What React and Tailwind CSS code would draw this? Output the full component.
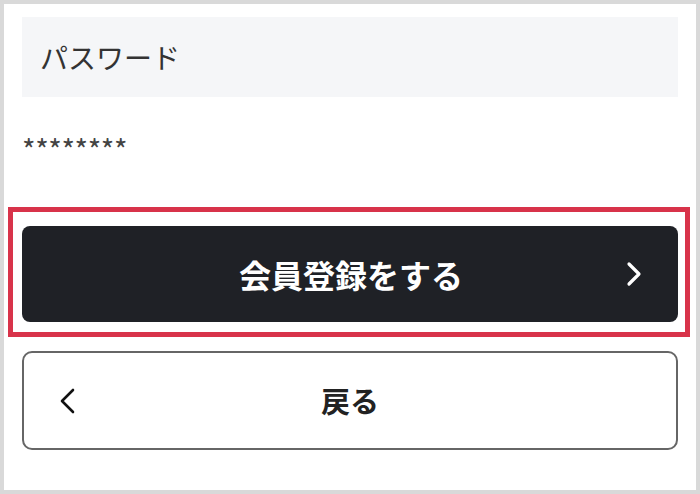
import React from "react";

const font = { fontFamily: '"Noto Sans CJK JP", "Noto Sans", sans-serif' };

export default function App() {
  return (
    <div
      className="w-[700px] h-[494px] border-4 border-[#d9d9d9] bg-white px-[18px] pt-[13px] box-border overflow-hidden"
      style={font}
    >
      <div className="h-[80px] bg-[#f5f6f8] flex items-center pl-[18px] text-[28px] text-[#333] leading-none">
        パスワード
      </div>
      <div className="h-[110px] pt-[37px] pl-[0px] text-[29px] tracking-[-0.4px] text-[#444] leading-none">
        ********
      </div>
      <div className="ml-[-14px] mr-[-12px] border-[5px] border-[#d8334a] pt-[14px] pb-[10px] pl-[9px] pr-[7px]">
        <button className="w-full h-[96px] rounded-[8px] bg-[#1f2126] text-white flex items-center relative">
          <span className="flex-1 text-center text-[32px] font-bold leading-none pl-[2px]">
            会員登録をする
          </span>
          <svg
            className="absolute right-[36px] top-1/2 -translate-y-1/2"
            width="16"
            height="26"
            viewBox="0 0 16 26"
            fill="none"
            stroke="white"
            strokeWidth="3.2"
            strokeLinecap="round"
            strokeLinejoin="round"
          >
            <path d="M3 3 L13 13 L3 23" />
          </svg>
        </button>
      </div>
      <button className="mt-[14px] w-full h-[99px] rounded-[10px] border-2 border-[#666] bg-white flex items-center relative">
        <svg
          className="absolute left-[34px] top-1/2 -translate-y-1/2"
          width="18"
          height="28"
          viewBox="0 0 18 28"
          fill="none"
          stroke="#111"
          strokeWidth="2.6"
          strokeLinecap="round"
          strokeLinejoin="round"
        >
          <path d="M15 3 L4 14 L15 25" />
        </svg>
        <span className="flex-1 text-center text-[29px] font-semibold text-[#222] leading-none">
          戻る
        </span>
      </button>
    </div>
  );
}
